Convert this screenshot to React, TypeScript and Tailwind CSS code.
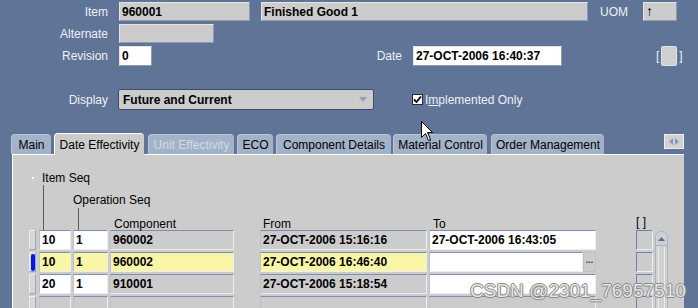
import React from 'react';

const font = "font-['Liberation_Sans',Arial,sans-serif]";

const topField = 'h-full flex items-center pl-[2px] font-bold text-black bg-[#cccccc] border border-t-[#e4e4e4] border-l-[#e4e4e4] border-r-[#8d9ab0] border-b-[#8d9ab0] overflow-hidden whitespace-nowrap';
const cell = 'h-full flex items-center pl-[2px] font-bold text-black border border-t-[#7f90ae] border-l-[#b8c2d2] border-r-[#eeeeee] border-b-[#eeeeee] overflow-hidden whitespace-nowrap';

type Row = {
    seq: string;
    op: string;
    comp: string;
    from: string;
    to: string;
    current?: boolean;
};

const rows: Row[] = [
    { seq: '10', op: '1', comp: '960002', from: '27-OCT-2006 15:16:16', to: '27-OCT-2006 16:43:05' },
    { seq: '10', op: '1', comp: '960002', from: '27-OCT-2006 16:46:40', to: '', current: true },
    { seq: '20', op: '1', comp: '910001', from: '27-OCT-2006 15:18:54', to: '' },
    { seq: '', op: '', comp: '', from: '', to: '' },
];

function Tab({ label, active, disabled, w }: { label: string; active?: boolean; disabled?: boolean; w: string }) {
    if (active) {
        return (
            <div className={`${w} h-[22px] -mb-px relative z-10 bg-[#cccccc] border-t border-l border-white rounded-t-[4px] flex items-center justify-center text-black`}>
                {label}
            </div>
        );
    }
    return (
        <div
            className={`${w} h-[20px] bg-[#a2b2c9] border-t border-l border-[#b9c6d8] rounded-t-[4px] flex items-center justify-center ${
                disabled ? 'text-[#d3dae4]' : 'text-black'
            }`}
        >
            {label}
        </div>
    );
}

export default function App() {
    return (
        <div className={`relative w-[698px] h-[308px] overflow-hidden bg-[#5f7496] text-[12px] ${font}`}>
            {/* header form */}
            <div className="pt-[2px] text-[#eef1f5]">
                <div className="flex items-center h-[19px]">
                    <div className="w-[108px] text-right">Item</div>
                    <div className="ml-[11px] w-[131px] h-full">
                        <div className={topField}>960001</div>
                    </div>
                    <div className="ml-[11px] w-[327px] h-full">
                        <div className={topField}>Finished Good 1</div>
                    </div>
                    <div className="ml-[12px] w-[32px]">UOM</div>
                    <div className="ml-[11px] w-[34px] h-full">
                        <div className={`${topField} text-[14px]`}>↑</div>
                    </div>
                </div>

                <div className="flex items-center h-[19px] mt-[3px]">
                    <div className="w-[108px] text-right">Alternate</div>
                    <div className="ml-[11px] w-[95px] h-full">
                        <div className={topField}></div>
                    </div>
                </div>

                <div className="flex items-center h-[20px] mt-[3px]">
                    <div className="w-[108px] text-right">Revision</div>
                    <div className="ml-[11px] w-[33px] h-full">
                        <div className={`${topField} bg-white`}>0</div>
                    </div>
                    <div className="ml-[215px] w-[35px] text-right">Date</div>
                    <div className="ml-[11px] w-[149px] h-full">
                        <div className={`${topField} bg-white`}>27-OCT-2006 16:40:37</div>
                    </div>
                    <div className="ml-[94px]">[</div>
                    <div className="ml-[2px] w-[16px] h-full rounded-[2px] bg-[#cfcfcf] border border-[#e4e4e4]"></div>
                    <div className="ml-[2px]">]</div>
                </div>

                <div className="flex items-center h-[21px] mt-[23px]">
                    <div className="w-[108px] text-right">Display</div>
                    <div className="ml-[10px] w-[256px] h-full flex items-center bg-[#cccccc] border border-[#3d4c68] rounded-[2px] pl-[4px] pr-[6px] font-bold text-black">
                        <span className="flex-1">Future and Current</span>
                        <svg width="8" height="5" viewBox="0 0 8 5">
                            <path d="M0 0 L8 0 L4 5 Z" fill="#8fa0bd" />
                        </svg>
                    </div>
                    <div className="ml-[38px] w-[11px] h-[11px] bg-white border border-[#2a2a2a] flex items-center justify-center">
                        <svg width="9" height="9" viewBox="0 0 9 9">
                            <path d="M1 4.5 L3.5 7 L8 1.5" stroke="#000" strokeWidth="1.8" fill="none" />
                        </svg>
                    </div>
                    <div className="ml-[2px]">
                        I<span className="underline">m</span>plemented Only
                    </div>
                </div>
            </div>

            {/* tabs */}
            <div className="mt-[22px] pl-[11px] pr-[14px]">
                <div className="flex items-end h-[22px]">
                    <Tab w="w-[40px]" label="Main" />
                    <div className="w-[3px]" />
                    <Tab w="w-[90px]" label="Date Effectivity" active />
                    <div className="w-[4px]" />
                    <Tab w="w-[86px]" label="Unit Effectivity" disabled />
                    <div className="w-[3px]" />
                    <Tab w="w-[36px]" label="ECO" />
                    <div className="w-[3px]" />
                    <Tab w="w-[115px]" label="Component Details" />
                    <div className="w-[2px]" />
                    <Tab w="w-[94px]" label="Material Control" />
                    <div className="w-[4px]" />
                    <Tab w="w-[113px]" label="Order Management" />
                    <div className="ml-auto self-start mt-[2px] w-[20px] h-[15px] bg-[#d2d2d2] border border-[#eeeeee] flex items-center justify-center gap-[2px]">
                        <svg width="4" height="7" viewBox="0 0 4 7">
                            <path d="M4 0 L0 3.5 L4 7 Z" fill="#8a9ab5" />
                        </svg>
                        <svg width="4" height="7" viewBox="0 0 4 7">
                            <path d="M0 0 L4 3.5 L0 7 Z" fill="#8a9ab5" />
                        </svg>
                    </div>
                </div>

                {/* panel */}
                <div className="ml-[1px] h-[160px] bg-[#cccccc] border-t border-l border-white overflow-hidden text-black">
                    <div className="flex items-center h-[15px] mt-[15px]">
                        <div className="ml-[19px] w-[2px] h-[2px] bg-white" />
                        <div className="ml-[8px]">Item Seq</div>
                    </div>

                    {/* column headers with tree lines */}
                    <div className="flex h-[45px] pl-[16px]">
                        <div className="w-[10px]" />
                        <div className="w-[32px] pl-[4px]">
                            <div className="w-px h-full bg-[#5a5a5a]" />
                        </div>
                        <div className="ml-[2px] w-[35px] flex flex-col justify-end">
                            <div className="h-[14px] leading-[14px] whitespace-nowrap">Operation Seq</div>
                            <div className="ml-[5px] mt-[1px] w-px h-[22px] bg-[#5a5a5a]" />
                        </div>
                        <div className="ml-[2px] w-[124px] flex items-end pl-[4px] leading-[14px] relative top-[1px]">Component</div>
                        <div className="ml-[26px] w-[167px] flex items-end pl-[3px] leading-[14px] relative top-[1px]">From</div>
                        <div className="ml-[2px] w-[167px] flex items-end pl-[4px] leading-[14px] relative top-[1px]">To</div>
                        <div className="ml-[40px] w-[17px] flex items-end leading-[14px] relative top-[-1px]">[ ]</div>
                    </div>

                    {/* rows */}
                    <div className="flex pl-[16px]">
                        <div className="flex flex-col gap-[2px]">
                            {rows.map((r, i) => (
                                <div key={i} className="flex h-[20px]">
                                    <div className="w-[7px] h-full bg-[#d6d6d6] border border-t-[#eeeeee] border-l-[#eeeeee] border-r-[#9aa6ba] border-b-[#9aa6ba] flex items-center justify-center">
                                        {r.current && <div className="w-[4px] h-[17px] rounded-[2px] bg-[#0a14e6]" />}
                                    </div>
                                    <div className="ml-[3px] w-[32px]">
                                        <div className={`${cell} ${r.current ? 'bg-[#fbf6a6]' : i < 3 ? 'bg-white' : 'bg-[#cccccc]'}`}>{r.seq}</div>
                                    </div>
                                    <div className="ml-[2px] w-[35px]">
                                        <div className={`${cell} ${r.current ? 'bg-[#fbf6a6]' : i < 3 ? 'bg-white' : 'bg-[#cccccc]'}`}>{r.op}</div>
                                    </div>
                                    <div className="ml-[2px] w-[124px]">
                                        <div className={`${cell} ${r.current ? 'bg-[#fbf6a6]' : 'bg-[#cccccc]'}`}>{r.comp}</div>
                                    </div>
                                    <div className="ml-[26px] w-[167px]">
                                        <div className={`${cell} ${r.current ? 'bg-[#fbf6a6]' : 'bg-[#cccccc]'}`}>{r.from}</div>
                                    </div>
                                    <div className="ml-[2px] w-[167px] flex">
                                        {r.current ? (
                                            <>
                                                <div className="w-[154px]">
                                                    <div className={`${cell} bg-white`}></div>
                                                </div>
                                                <div className="w-[13px] h-full bg-[#cccccc] border border-[#b8c2d2] flex items-center justify-center">
                                                    <span className="text-[9px] leading-none font-bold text-[#5a1a1a] -mt-[3px]">...</span>
                                                </div>
                                            </>
                                        ) : (
                                            <div className="w-full">
                                                <div className={`${cell} ${i < 3 ? 'bg-white' : 'bg-[#cccccc]'}`}>{r.to}</div>
                                            </div>
                                        )}
                                    </div>
                                    <div className="ml-[40px] w-[17px] h-full bg-[#cccccc] border border-t-[#6e83ab] border-l-[#6e83ab] border-r-[#eeeeee] border-b-[#eeeeee]" />
                                </div>
                            ))}
                        </div>
                        <div className="ml-[2px] mt-[1px] w-[13px] h-[90px] rounded-t-[6px] border border-[#a8b6cc] bg-[#d0d0d0] flex flex-col items-center">
                            <div className="w-full h-[14px] rounded-t-[6px] border-b border-[#a8b6cc] flex items-center justify-center">
                                <svg width="7" height="4" viewBox="0 0 7 4">
                                    <path d="M0 4 L3.5 0 L7 4 Z" fill="#5a6e94" />
                                </svg>
                            </div>
                            <div className="mt-[1px] w-[7px] flex-1 border-x border-[#e8e8e8]" />
                        </div>
                    </div>
                </div>
            </div>

            {/* mouse pointer */}
            <svg className="absolute left-[421px] top-[121px]" width="13" height="21" viewBox="0 0 13 21">
                <path d="M0.5 0.5 L0.5 16.5 L4.5 12.5 L7.5 19.5 L9.5 18.5 L6.5 11.5 L11.5 11.5 Z" fill="#ffffff" stroke="#000000" strokeWidth="1" />
            </svg>

            {/* watermark */}
            <div className="absolute left-[470px] top-[277px] text-[19px] text-[#e6e6e6] [text-shadow:-1px_0_#8a8a8a,1px_0_#8a8a8a,0_-1px_#8a8a8a,0_1px_#8a8a8a] whitespace-nowrap">
                CSDN @2301_76957510
            </div>
        </div>
    );
}
